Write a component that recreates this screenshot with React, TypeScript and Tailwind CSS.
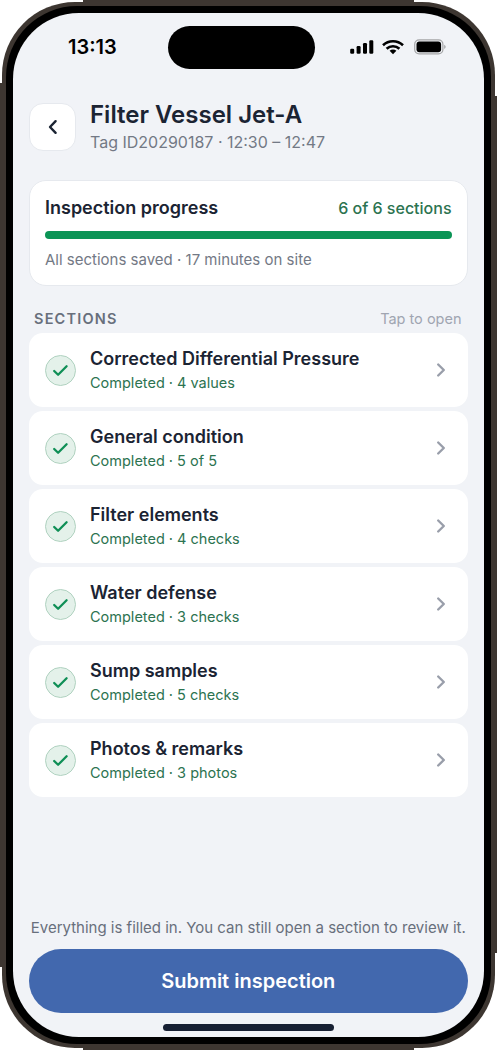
const sections = [
  { name: "Corrected Differential Pressure", status: "Completed · 4 values" },
  { name: "General condition", status: "Completed · 5 of 5" },
  { name: "Filter elements", status: "Completed · 4 checks" },
  { name: "Water defense", status: "Completed · 3 checks" },
  { name: "Sump samples", status: "Completed · 5 checks" },
  { name: "Photos & remarks", status: "Completed · 3 photos" },
];

function StatusBar() {
  return (
    <div className="flex h-[43px] shrink-0 mt-[13px]">
      <div className="w-[155px] pl-[55px] pt-[6px] text-[20px] leading-[30px] font-semibold text-black">
        13:13
      </div>
      <div className="w-[147px] h-[43px] rounded-full bg-black" />
      <div className="flex items-start pl-[35px] pt-[13px]">
        <svg width="24" height="16" viewBox="0 0 24 16">
          <rect x="0.2" y="9.8" width="4" height="5" rx="1.2" />
          <rect x="6.6" y="7" width="4" height="7.8" rx="1.2" />
          <rect x="13" y="4" width="4" height="10.8" rx="1.2" />
          <rect x="19.3" y="1.2" width="4" height="13.6" rx="1.2" />
        </svg>
        <svg className="ml-[8px]" width="22" height="16" viewBox="0 0 22 16">
          <g fill="none" stroke="#000" strokeWidth="2.6">
            <path d="M1 6.3C6.6 0.9 15.4 0.9 21 6.3" />
            <path d="M4.6 9.8C8.2 6.3 13.8 6.3 17.4 9.8" />
          </g>
          <path d="M7.6 11.8C9.5 10.1 12.5 10.1 14.4 11.8L11 15.2Z" />
        </svg>
        <svg className="ml-[10px]" width="33" height="16" viewBox="0 0 33 16">
          <rect x="0.7" y="0.9" width="28.2" height="14" rx="4.4" fill="none" stroke="#a5a6a8" strokeWidth="1.2" />
          <rect x="2.5" y="2.6" width="24.6" height="10.6" rx="2.9" />
          <path d="M30.2 5.8C32.2 6.6 32.2 9.2 30.2 10Z" fill="#a5a6a8" />
        </svg>
      </div>
    </div>
  );
}

function Header() {
  return (
    <div className="flex items-center mt-[31px] px-4">
      <button className="flex h-[48px] w-[47px] items-center justify-center rounded-[14px] border border-[#e6e9ee] bg-white">
        <svg width="12" height="18" viewBox="0 0 12 18" fill="none" stroke="#1b2433" strokeWidth="2.4" strokeLinecap="round" strokeLinejoin="round">
          <path d="M8.6 3.2L3 9L8.6 14.8" />
        </svg>
      </button>
      <div className="ml-[14px]">
        <h1 className="text-[24px] leading-[30px] font-semibold text-[#1b2433]">
          Filter Vessel Jet-A
        </h1>
        <p className="text-[16px] leading-[24px] text-[#737985]">
          Tag ID20290187 · 12:30 – 12:47
        </p>
      </div>
    </div>
  );
}

function ProgressCard() {
  return (
    <div className="mx-4 mt-[26px] h-[106px] rounded-[17px] border border-[#e6e9ee] bg-white px-[15px] pt-[15px]">
      <div className="flex items-center justify-between leading-[24px]">
        <h2 className="text-[18px] font-semibold text-[#1b2433]">
          Inspection progress
        </h2>
        <span className="text-[16px] font-medium text-[#2c7350]">
          6 of 6 sections
        </span>
      </div>
      <div className="mt-[11px] h-[7.5px] rounded-full bg-[#0b9456]" />
      <p className="mt-[11px] text-[15px] leading-[20px] text-[#737985]">
        All sections saved · 17 minutes on site
      </p>
    </div>
  );
}

function SectionRow({ name, status }: { name: string; status: string }) {
  return (
    <div className="flex h-[74px] items-center rounded-[14px] bg-white pl-4 pr-[20px]">
      <div className="flex h-[31px] w-[31px] items-center justify-center rounded-full border border-[#b0d2c0] bg-[#e4f1ea]">
        <svg width="17" height="15" viewBox="0 0 17 15" fill="none" stroke="#0f8f56" strokeWidth="2.3" strokeLinecap="round" strokeLinejoin="round">
          <path d="M2.2 8L6.1 11.8L14.6 3.2" />
        </svg>
      </div>
      <div className="ml-[14px] flex-1">
        <p className="text-[18px] leading-[24px] font-semibold text-[#1b2433]">{name}</p>
        <p className="mt-[1px] text-[14.5px] leading-[22px] text-[#2c7350]">{status}</p>
      </div>
      <svg width="14" height="18" viewBox="0 0 14 18" fill="none" stroke="#999eaa" strokeWidth="2.4" strokeLinecap="round" strokeLinejoin="round">
        <path d="M4.2 3.5L9.8 9L4.2 14.5" />
      </svg>
    </div>
  );
}

function Screen() {
  return (
    <div className="flex h-[1024px] w-[470.5px] flex-col overflow-hidden rounded-[66px] bg-[#f1f3f7]">
      <StatusBar />
      <Header />
      <ProgressCard />
      <div className="mt-[21px] flex items-center justify-between pl-[21px] pr-[22px] leading-[24px]">
        <h3 className="text-[14.5px] font-semibold tracking-[1.2px] text-[#686f7c]">SECTIONS</h3>
        <span className="text-[14.5px] text-[#a0a5b1]">Tap to open</span>
      </div>
      <div className="mx-4 mt-[2px] flex flex-col gap-[4.1px]">
        {sections.map((section) => (
          <SectionRow key={section.name} {...section} />
        ))}
      </div>
      <div className="mt-auto px-4 pb-[6.5px]">
        <p className="mb-[11px] text-center text-[15px] leading-[20px] text-[#686f7c]">
          Everything is filled in. You can still open a section to review it.
        </p>
        <button className="block h-[64px] w-full rounded-full bg-[#4268ae] text-[20px] font-semibold text-white">
          Submit inspection
        </button>
        <div className="mx-auto mt-[11.5px] h-[6.5px] w-[171px] rounded-full bg-[#172033]" />
      </div>
    </div>
  );
}

export default function App() {
  return (
    <div className="grid h-[1050px] w-[497px] overflow-hidden bg-white font-['Inter',sans-serif] whitespace-nowrap *:col-start-1 *:row-start-1">
      {/* outer rim, flush with the edges between the corners */}
      <div className="mx-[83px] bg-[#3d3631]" />
      <div className="mt-[83px] mb-[83px] w-[248px] bg-[#3d3631]" />
      <div className="mt-[96px] mb-[97px] ml-[248px] bg-[#3d3631]" />
      <div className="m-[2px] rounded-[73px] bg-[#3d3631] p-[4px]">
        <div className="h-[1038px] w-[484.5px] rounded-[71px] bg-black p-[7px]">
          <Screen />
        </div>
      </div>
    </div>
  );
}
